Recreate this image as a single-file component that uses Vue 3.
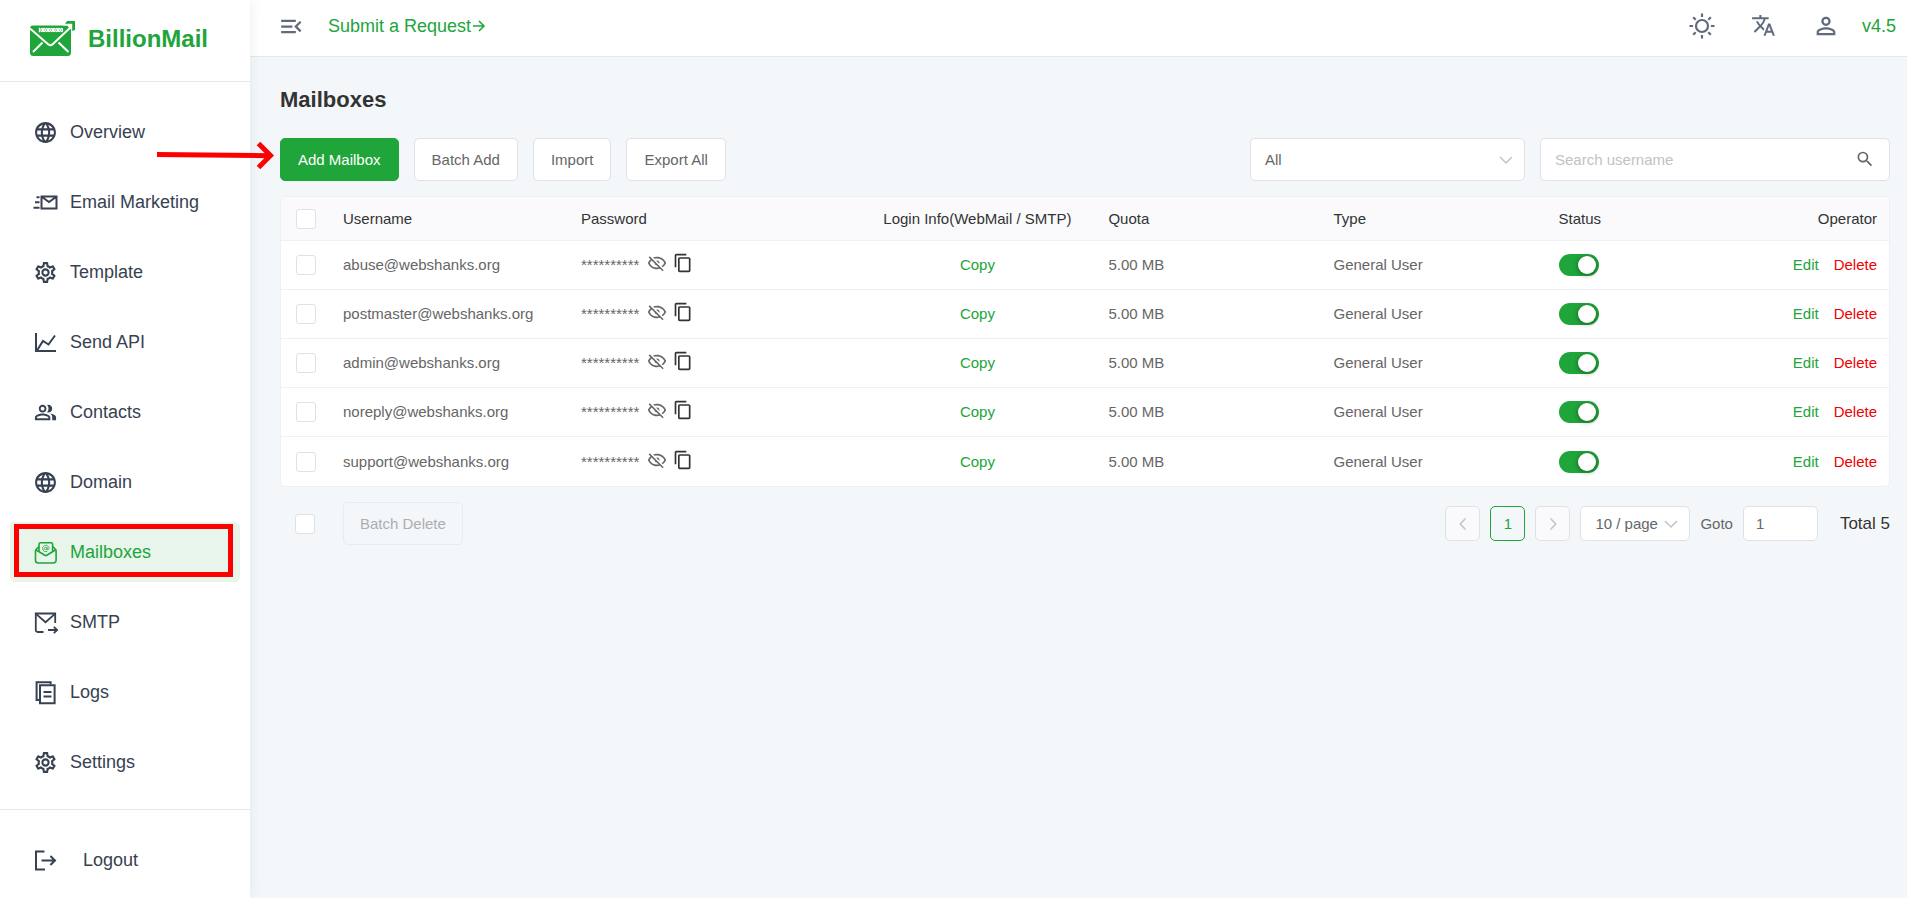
<script setup>
import { ref } from 'vue'

const icons = {
  globe:
    'M11.99 2C6.47 2 2 6.48 2 12s4.47 10 9.99 10C17.52 22 22 17.52 22 12S17.52 2 11.99 2zm6.93 6h-2.95a15.65 15.65 0 0 0-1.38-3.56A8.03 8.03 0 0 1 18.92 8zM12 4.04c.83 1.2 1.48 2.53 1.91 3.96h-3.82c.43-1.43 1.08-2.76 1.91-3.96zM4.26 14C4.1 13.36 4 12.69 4 12s.1-1.36.26-2h3.38c-.08.66-.14 1.32-.14 2s.06 1.34.14 2H4.26zm.82 2h2.95c.32 1.25.78 2.45 1.38 3.56A7.99 7.99 0 0 1 5.08 16zm2.95-8H5.08a7.99 7.99 0 0 1 4.33-3.56A15.65 15.65 0 0 0 8.03 8zM12 19.96c-.83-1.2-1.48-2.53-1.91-3.96h3.82c-.43 1.43-1.08 2.76-1.91 3.96zM14.34 14H9.66c-.09-.66-.16-1.32-.16-2s.07-1.35.16-2h4.68c.09.65.16 1.32.16 2s-.07 1.34-.16 2zm.25 5.56c.6-1.11 1.06-2.31 1.38-3.56h2.95a8.03 8.03 0 0 1-4.33 3.56zM16.36 14c.08-.66.14-1.32.14-2s-.06-1.34-.14-2h3.38c.16.64.26 1.31.26 2s-.1 1.36-.26 2h-3.38z',
  gear:
    'M12 8a4 4 0 0 1 4 4a4 4 0 0 1-4 4a4 4 0 0 1-4-4a4 4 0 0 1 4-4m0 2a2 2 0 0 0-2 2a2 2 0 0 0 2 2a2 2 0 0 0 2-2a2 2 0 0 0-2-2m-2 12c-.25 0-.46-.18-.5-.42l-.37-2.65c-.63-.25-1.17-.59-1.69-.99l-2.49 1.01c-.22.08-.49 0-.61-.22l-2-3.46a.493.493 0 0 1 .12-.64l2.11-1.66L4.5 12l.07-1l-2.11-1.63a.493.493 0 0 1-.12-.64l2-3.46c.12-.22.39-.31.61-.22l2.49 1c.52-.39 1.06-.73 1.69-.98l.37-2.65c.04-.24.25-.42.5-.42h4c.25 0 .46.18.5.42l.37 2.65c.63.25 1.17.59 1.69.98l2.49-1c.22-.09.49 0 .61.22l2 3.46c.13.22.07.49-.12.64L19.43 11l.07 1l-.07 1l2.11 1.63c.19.15.25.42.12.64l-2 3.46c-.12.22-.39.31-.61.22l-2.49-1c-.52.39-1.06.73-1.69.98l-.37 2.65c-.04.24-.25.42-.5.42h-4m1.25-18l-.37 2.61c-1.2.25-2.26.89-3.03 1.78L5.44 7.35l-.75 1.3L6.8 10.2a5.55 5.55 0 0 0 0 3.6l-2.12 1.56l.75 1.3l2.43-1.04c.77.88 1.82 1.52 3.01 1.76l.37 2.62h1.52l.37-2.61c1.19-.25 2.24-.89 3.01-1.77l2.43 1.04l.75-1.3l-2.12-1.55c.4-1.17.4-2.44 0-3.61l2.11-1.55l-.75-1.3l-2.41 1.04a5.42 5.42 0 0 0-3.03-1.77L12.75 4h-1.5Z',
  people:
    'M16.67 13.13C18.04 14.06 19 15.32 19 17v3h4v-3c0-2.18-3.57-3.47-6.33-3.87zM15 12c2.21 0 4-1.79 4-4s-1.79-4-4-4c-.47 0-.91.1-1.33.24a5.98 5.98 0 0 1 0 7.52c.42.14.86.24 1.33.24zM9 12c2.21 0 4-1.79 4-4s-1.79-4-4-4-4 1.79-4 4 1.79 4 4 4zm0-6c1.1 0 2 .9 2 2s-.9 2-2 2-2-.9-2-2 .9-2 2-2zm0 7c-2.67 0-8 1.34-8 4v3h16v-3c0-2.66-5.33-4-8-4zm6 5H3v-.99C3.2 16.29 6.3 15 9 15s5.8 1.29 6 2v1z'
}

const strokes = {
  send: [
    'M8.5 6.5h15v12h-15zM9 7l7 5l7-5',
    'M3.5 7.2h3M2 12.2h4.5M.5 17.8h6'
  ],
  chart: ['M3 3v18h20', 'M4 20.5L10 11l5.5 3.5L22 5.5'],
  mailbox: [
    'M6 6.5L3.2 9.2Q2.5 10 2.5 11v9.2a2.8 2.8 0 0 0 2.8 2.8h15a2.8 2.8 0 0 0 2.8-2.8V11q0-1-.7-1.8L19.6 6.5',
    'M2.8 9.8l8.6 5.2q1.4.9 2.8 0l8.6-5.2',
    'M6 11.5V4.2A1.4 1.4 0 0 1 7.4 2.8h10.8a1.4 1.4 0 0 1 1.4 1.4V11.5'
  ],
  smtp: [
    'M10.5 22H4.6A1.8 1.8 0 0 1 2.8 20.2V3.5h19.4V13',
    'M3 3.8l9.5 8.4L22 3.8',
    'M15 20h9M20.8 16.8L24.2 20l-3.4 3.2'
  ],
  logs: ['M7 5.2h14.6v18H7z', 'M6 20H3.6V2.2h14V4.5', 'M10.5 12h8M10.5 16.5h8'],
  logout: ['M11.5 3.6H3v18h9', 'M8.5 12.5H22M17.4 8l4.6 4.5l-4.6 4.5']
}

const menu = [
  { label: 'Overview', fill: 'globe' },
  { label: 'Email Marketing', stroke: 'send' },
  { label: 'Template', fill: 'gear' },
  { label: 'Send API', stroke: 'chart' },
  { label: 'Contacts', fill: 'people' },
  { label: 'Domain', fill: 'globe' },
  { label: 'Mailboxes', stroke: 'mailbox', active: true },
  { label: 'SMTP', stroke: 'smtp' },
  { label: 'Logs', stroke: 'logs' },
  { label: 'Settings', fill: 'gear' }
]

const rows = ref(
  ['abuse', 'postmaster', 'admin', 'noreply', 'support'].map((name) => ({
    email: name + '@webshanks.org',
    quota: '5.00 MB',
    type: 'General User',
    enabled: true,
    selected: false
  }))
)
const keyword = ref('')
const gotoPage = ref('1')
</script>

<template>
  <div class="layout">
    <aside class="sidebar">
      <div class="brand">
        <svg class="logo" width="46" height="36" viewBox="0 0 46 36" aria-hidden="true">
          <path d="M3 4.5h34l4 4V31.5a3.5 3.5 0 0 1-3.5 3.5h-34A3.5 3.5 0 0 1 0 31.5V7.5a3 3 0 0 1 3-3z" fill="#20a53a" />
          <path d="M0 7.5L18.4 23.4q2 1.6 4 0L42 5M3 31l9.5-9.5M38.5 31L28.5 21.5" fill="none" stroke="#fff" stroke-width="2" />
          <path d="M33 3.7h9v7" fill="none" stroke="#fff" stroke-width="1.6" />
          <path d="M37 0h8v9l-2.8 1V2.8H35z" fill="#20a53a" />
          <g fill="none" stroke="#fff" stroke-width="1.2">
            <path d="M9.4 6.8v4.4" />
            <ellipse v-for="n in 9" :key="n" :cx="9.2 + n * 2.5" cy="9" rx="0.9" ry="1.6" />
          </g>
        </svg>
        <span class="brand-name">BillionMail</span>
      </div>
      <nav class="menu">
        <a v-for="item in menu" :key="item.label" href="#" class="item" :class="{ active: item.active }">
          <svg v-if="item.fill" class="icon" :viewBox="item.fill === 'people' ? '-1 -1 26 26' : '0 0 24 24'" fill="currentColor" aria-hidden="true">
            <path :d="icons[item.fill]" />
          </svg>
          <svg v-else class="icon" :class="item.stroke" viewBox="0 0 25 25" aria-hidden="true">
            <path v-for="d in strokes[item.stroke]" :key="d" :d="d" />
            <g v-if="item.stroke === 'mailbox'" class="at">
              <circle cx="12.7" cy="8.5" r="1.2" />
              <path d="M14.1 7.1v2q.2 1 1.2.6q1-1 .5-2.4a3.2 3.2 0 1 0-1.4 4" />
            </g>
          </svg>
          <span>{{ item.label }}</span>
        </a>
      </nav>
      <div class="leave">
        <a href="#" class="item">
          <svg class="icon logout" viewBox="0 0 25 25" aria-hidden="true">
            <path v-for="d in strokes.logout" :key="d" :d="d" />
          </svg>
          <span>Logout</span>
        </a>
      </div>
      <div class="highlight" aria-hidden="true"></div>
      <svg class="pointer" width="120" height="32" viewBox="0 0 120 32" aria-hidden="true">
        <path d="M0 14.5L113 15.7" stroke="#f00" stroke-width="5" fill="none" />
        <path d="M101.5 3.5L113.5 15.5L101.5 27.5" stroke="#f00" stroke-width="5" fill="none" />
      </svg>
    </aside>

    <div class="main">
      <header class="topbar">
        <button class="plain" type="button" aria-label="Collapse menu">
          <svg class="fold" viewBox="3 0 21 24" fill="currentColor"><path d="M3 18v-2h13v2zm16.6-1l-5-5l5-5L21 8.4L17.4 12l3.6 3.6zM3 13v-2h10v2zm0-5V6h13v2z" /></svg>
        </button>
        <a href="#" class="request">
          Submit a Request
          <svg width="14" height="14" viewBox="0 0 14 14" aria-hidden="true"><path d="M1 7h11M7 2l5 5l-5 5" fill="none" stroke="currentColor" stroke-width="1.5" /></svg>
        </a>
        <div class="tools">
          <button class="plain" type="button" aria-label="Theme">
            <svg width="28" height="28" viewBox="0 0 28 28" fill="none" stroke="currentColor" stroke-width="2.2">
              <circle cx="14" cy="14" r="6" />
              <path d="M14 1.5v3.6M14 22.9v3.6M1.5 14h3.6M22.9 14h3.6M5.2 5.2l2.5 2.5M20.3 20.3l2.5 2.5M5.2 22.8l2.5-2.5M20.3 7.7l2.5-2.5" />
            </svg>
          </button>
          <button class="plain" type="button" aria-label="Language">
            <svg width="28" height="28" viewBox="-1 -1 27 27" fill="currentColor"><path d="M12.87 15.07l-2.54-2.51.03-.03A17.52 17.52 0 0 0 14.07 6H17V4h-7V2H8v2H1v1.99h11.17C11.5 7.92 10.44 9.75 9 11.35 8.07 10.32 7.3 9.19 6.69 8h-2c.73 1.63 1.73 3.17 2.98 4.56l-5.09 5.02L4 19l5-5 3.11 3.11.76-2.04zM18.5 10h-2L12 22h2l1.12-3h4.75L21 22h2l-4.5-12zm-2.62 7l1.62-4.33L19.12 17h-3.24z" /></svg>
          </button>
          <button class="plain" type="button" aria-label="Account">
            <svg width="28" height="28" viewBox="0 0 24 24" fill="currentColor"><path d="M12 5.9a2.1 2.1 0 1 1 0 4.2 2.1 2.1 0 0 1 0-4.2m0 9c2.97 0 6.1 1.46 6.1 2.1v1.1H5.9V17c0-.64 3.13-2.1 6.1-2.1M12 4C9.79 4 8 5.79 8 8s1.79 4 4 4 4-1.79 4-4-1.79-4-4-4zm0 9c-2.67 0-8 1.34-8 4v3h16v-3c0-2.66-5.33-4-8-4z" /></svg>
          </button>
          <a href="#" class="version">v4.5</a>
        </div>
      </header>

      <main class="content">
        <h1>Mailboxes</h1>
        <div class="toolbar">
          <button class="btn primary" type="button">Add Mailbox</button>
          <button class="btn" type="button">Batch Add</button>
          <button class="btn" type="button">Import</button>
          <button class="btn" type="button">Export All</button>
          <div class="field filter">
            <select aria-label="Domain"><option>All</option></select>
            <svg class="caret" width="14" height="14" viewBox="0 0 14 14" aria-hidden="true"><path d="M1 4l6 6l6-6" /></svg>
          </div>
          <div class="field search">
            <input v-model="keyword" type="text" placeholder="Search username" aria-label="Search username" />
            <button class="plain" type="button" aria-label="Search">
              <svg width="20" height="20" viewBox="0 1 24 24" fill="currentColor"><path d="M15.5 14h-.79l-.28-.27A6.47 6.47 0 0 0 16 9.5 6.5 6.5 0 1 0 9.5 16c1.61 0 3.09-.59 4.23-1.57l.27.28v.79l5 4.99L20.49 19l-4.99-5zm-6 0C7.01 14 5 11.99 5 9.5S7.01 5 9.5 5 14 7.01 14 9.5 11.99 14 9.5 14z" /></svg>
            </button>
          </div>
        </div>

        <div class="panel">
          <table>
            <colgroup>
              <col class="c-check" /><col class="c-user" /><col class="c-pass" /><col class="c-user" />
              <col class="c-info" /><col class="c-info" /><col class="c-info" /><col />
            </colgroup>
            <thead>
              <tr>
                <th class="check"><input type="checkbox" class="box" aria-label="Select all" /></th>
                <th>Username</th>
                <th>Password</th>
                <th class="center">Login Info(WebMail / SMTP)</th>
                <th>Quota</th>
                <th>Type</th>
                <th>Status</th>
                <th class="right">Operator</th>
              </tr>
            </thead>
            <tbody>
              <tr v-for="row in rows" :key="row.email">
                <td class="check"><input v-model="row.selected" type="checkbox" class="box" :aria-label="'Select ' + row.email" /></td>
                <td>{{ row.email }}</td>
                <td>
                  <div class="secret">
                    <span class="mask">**********</span>
                    <button class="plain" type="button" aria-label="Show password">
                      <svg width="20" height="20" viewBox="0 0 24 24" fill="#666"><path d="M2 5.27L3.28 4L20 20.72L18.73 22l-3.08-3.08c-1.15.38-2.37.58-3.65.58c-5 0-9.27-3.11-11-7.5c.69-1.76 1.79-3.31 3.19-4.54L2 5.27M12 9a3 3 0 0 1 3 3a3 3 0 0 1-.17 1L11 9.17A3 3 0 0 1 12 9m0-4.5c5 0 9.27 3.11 11 7.5a11.79 11.79 0 0 1-4 5.19l-1.42-1.43A9.862 9.862 0 0 0 20.82 12A9.821 9.821 0 0 0 12 6.5c-1.09 0-2.16.18-3.16.5L7.3 5.47c1.44-.62 3.03-.97 4.7-.97M3.18 12A9.821 9.821 0 0 0 12 17.5c.69 0 1.37-.07 2-.21L11.72 15A3.064 3.064 0 0 1 9 12.28L5.6 8.87c-.99.85-1.82 1.91-2.42 3.13Z" /></svg>
                    </button>
                    <button class="plain" type="button" aria-label="Copy password">
                      <svg width="20" height="20" viewBox="0 0 24 24" fill="#333"><path d="M16 1H4c-1.1 0-2 .9-2 2v14h2V3h12V1zm3 4H8c-1.1 0-2 .9-2 2v14c0 1.1.9 2 2 2h11c1.1 0 2-.9 2-2V7c0-1.1-.9-2-2-2zm0 16H8V7h11v14z" /></svg>
                    </button>
                  </div>
                </td>
                <td class="center"><button class="plain link" type="button">Copy</button></td>
                <td>{{ row.quota }}</td>
                <td>{{ row.type }}</td>
                <td><input v-model="row.enabled" type="checkbox" role="switch" class="switch" :aria-label="'Status of ' + row.email" /></td>
                <td>
                  <div class="actions">
                    <button class="plain link" type="button">Edit</button>
                    <button class="plain link danger" type="button">Delete</button>
                  </div>
                </td>
              </tr>
            </tbody>
          </table>
        </div>

        <div class="footer">
          <input type="checkbox" class="box" aria-label="Select all rows" />
          <button class="btn" type="button" disabled>Batch Delete</button>
          <div class="pager">
            <button class="page" type="button" disabled aria-label="Previous page">
              <svg width="14" height="14" viewBox="0 0 14 14"><path d="M9.5 1.5L4.2 7l5.3 5.5" /></svg>
            </button>
            <button class="page current" type="button">1</button>
            <button class="page" type="button" disabled aria-label="Next page">
              <svg width="14" height="14" viewBox="0 0 14 14"><path d="M4.5 1.5L9.8 7l-5.3 5.5" /></svg>
            </button>
            <div class="field size">
              <select aria-label="Page size"><option>10 / page</option></select>
              <svg class="caret" width="14" height="14" viewBox="0 0 14 14" aria-hidden="true"><path d="M1 4l6 6l6-6" /></svg>
            </div>
            <label for="goto">Goto</label>
            <input id="goto" v-model="gotoPage" type="text" class="goto" />
            <span class="total">Total 5</span>
          </div>
        </div>
      </main>
    </div>
  </div>
</template>

<style>
body {
  margin: 0;
  background: #f3f7fa;
}
</style>

<style scoped>
.layout {
  display: flex;
  min-height: 100vh;
  font-family: "Liberation Sans", Arial, sans-serif;
  font-size: 15px;
  line-height: 24px;
  color: #666;
}
.layout *,
.layout *::before {
  box-sizing: border-box;
}
a {
  color: inherit;
  text-decoration: none;
}
button,
input,
select {
  margin: 0;
  font: inherit;
  color: inherit;
  outline: none;
}
svg {
  display: block;
  flex: none;
}
.plain {
  display: block;
  padding: 0;
  border: 0;
  background: none;
}

.sidebar {
  position: relative;
  z-index: 1;
  display: flex;
  flex: none;
  flex-direction: column;
  width: 250px;
  background: #fff;
  box-shadow: 0 0 12px rgba(30, 50, 70, 0.08);
}
.brand {
  display: flex;
  align-items: center;
  gap: 12px;
  height: 82px;
  padding: 0 30px 4px;
  border-bottom: 1px solid #e5e7eb;
}
.brand-name {
  font-size: 24px;
  font-weight: 700;
  line-height: 32px;
  color: #20a53a;
}
.menu {
  display: flex;
  flex: 1;
  flex-direction: column;
  gap: 10px;
  padding: 20px 10px 0;
}
.item {
  display: flex;
  align-items: center;
  gap: 12px;
  height: 60px;
  padding: 0 23px;
  border-radius: 5px;
  font-size: 18px;
  color: #374151;
}
.item.active {
  background: #e8f5eb;
  color: #20a53a;
}
.icon {
  width: 25px;
  height: 25px;
}
.icon:not([fill]) {
  fill: none;
  stroke: currentColor;
  stroke-width: 2;
}
.icon.mailbox {
  stroke-width: 1.6;
}
.icon.smtp {
  stroke-width: 1.8;
}
.icon .at {
  stroke-width: 0.8;
}
.leave {
  padding: 20px 10px 8px;
  border-top: 1px solid #e5e7eb;
}
.leave .item {
  gap: 25px;
}
.highlight {
  position: absolute;
  top: 524px;
  left: 14px;
  width: 219px;
  height: 53px;
  border: 5px solid #f00;
}
.pointer {
  position: absolute;
  top: 140px;
  left: 157px;
}

.main {
  flex: 1;
  min-width: 0;
}
.topbar {
  display: flex;
  align-items: center;
  height: 57px;
  padding: 0 11px 4px 31px;
  border-bottom: 1px solid #e5e7eb;
  background: #fff;
  color: #5f6b7c;
}
.fold {
  width: 24px;
  height: 27px;
}
.request {
  display: flex;
  align-items: center;
  gap: 1px;
  margin-left: 23px;
  font-size: 18px;
  color: #20a53a;
}
.tools {
  display: flex;
  align-items: center;
  gap: 34px;
  margin-left: auto;
}
.version {
  margin-left: -12px;
  font-size: 18px;
  color: #20a53a;
}

.content {
  padding: 30px 17px 30px 30px;
}
h1 {
  margin: 0 0 25px;
  font-size: 22px;
  line-height: 26px;
  color: #333;
}
.toolbar {
  display: flex;
  gap: 15px;
  margin-bottom: 15px;
}
.btn {
  height: 43px;
  padding: 0 16px;
  border: 1px solid #e0e0e6;
  border-radius: 5px;
  background: #fff;
}
.toolbar .btn {
  padding: 0 17px;
}
.btn.primary {
  border-color: #20a53a;
  background: #20a53a;
  color: #fff;
}
.btn:disabled {
  background: transparent;
  opacity: 0.5;
}
.field {
  position: relative;
  display: flex;
  align-items: center;
  border: 1px solid #e0e0e6;
  border-radius: 5px;
  background: #fff;
}
.field select,
.field input {
  width: 100%;
  height: 100%;
  padding: 0 14px;
  border: 0;
  background: none;
  appearance: none;
}
.field input::placeholder {
  color: #c2c2c2;
  opacity: 1;
}
.filter {
  width: 275px;
  margin-left: auto;
}
.search {
  width: 350px;
  padding-right: 14px;
}
.caret {
  position: absolute;
  right: 11px;
  pointer-events: none;
}
.caret path,
.page path {
  fill: none;
  stroke: #c2c2c2;
  stroke-width: 1.5;
}

.panel {
  overflow: hidden;
  border: 1px solid #efeff5;
  border-radius: 5px;
  background: #fff;
}
table {
  width: 100%;
  border-spacing: 0;
  table-layout: fixed;
}
.c-check {
  width: 50px;
}
.c-user {
  width: 14.8%;
}
.c-pass {
  width: 18%;
}
.c-info {
  width: 14%;
}
th,
td {
  padding: 0 12px;
  border-bottom: 1px solid #efeff5;
  text-align: left;
  white-space: nowrap;
}
th {
  height: 44px;
  background: #fafafc;
  font-weight: 400;
  color: #333;
}
td {
  height: 49px;
}
tbody tr:last-child td {
  border-bottom: 0;
}
.check {
  padding: 0 15px;
}
.center {
  text-align: center;
}
.center .link {
  display: inline-block;
}
.right {
  text-align: right;
}
.box {
  display: block;
  flex: none;
  width: 20px;
  height: 20px;
  border: 1px solid #e0e0e6;
  border-radius: 3px;
  background: #fff;
  appearance: none;
}
.box:checked {
  border-color: #20a53a;
  background: #20a53a;
}
.secret {
  display: flex;
  align-items: center;
  gap: 6px;
  padding-bottom: 4px;
}
.mask {
  padding: 4px 2px 0 0;
}
.link {
  color: #20a53a;
}
.danger {
  color: #f00000;
}
.switch {
  display: flex;
  align-items: center;
  width: 40px;
  height: 22px;
  padding: 0 3px;
  border-radius: 11px;
  background: #dbdbdb;
  appearance: none;
}
.switch::before {
  width: 18px;
  height: 18px;
  border-radius: 50%;
  background: #fff;
  box-shadow: 0 1px 4px 1px rgba(0, 0, 0, 0.3);
  content: "";
}
.switch:checked {
  justify-content: flex-end;
  background: #20a53a;
}
.actions {
  display: flex;
  justify-content: flex-end;
  gap: 15px;
}

.footer {
  display: flex;
  align-items: center;
  gap: 28px;
  padding: 15px 0 0 15px;
}
.pager {
  display: flex;
  align-items: center;
  gap: 10px;
  margin-left: auto;
}
.page {
  display: flex;
  align-items: center;
  justify-content: center;
  width: 35px;
  height: 35px;
  padding: 0;
  border: 1px solid #e0e0e6;
  border-radius: 5px;
  background: #fafafc;
}
.page.current {
  border-color: #20a53a;
  background: none;
  color: #20a53a;
}
.size {
  width: 110px;
  height: 35px;
}
.goto {
  width: 75px;
  height: 35px;
  padding: 0 12px;
  border: 1px solid #e0e0e6;
  border-radius: 5px;
  background: #fff;
}
.total {
  margin-left: 12px;
  font-size: 17px;
  color: #333;
}
</style>
